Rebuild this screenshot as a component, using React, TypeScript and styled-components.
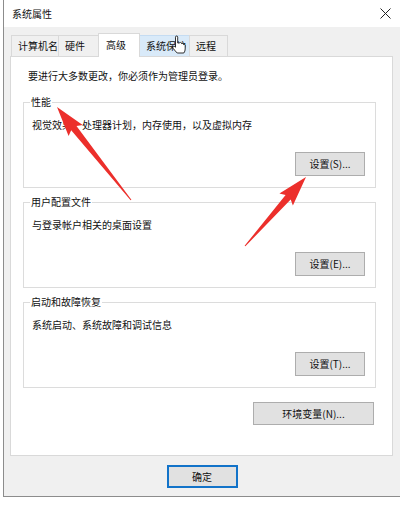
import React from 'react';
import styled, { createGlobalStyle } from 'styled-components';

const FONT = '"Noto Sans CJK SC", "Noto Sans", "Liberation Sans", sans-serif';

const GlobalStyle = createGlobalStyle`
  html, body {
    margin: 0;
    padding: 0;
    background: #ffffff;
  }
  body {
    font-family: ${FONT};
    font-size: 10px;
    color: #111;
  }
`;

type Pt = [number, number];

const tabs = [
  { label: '计算机名', width: 48 },
  { label: '硬件', width: 41 },
  { label: '高级', width: 42, active: true },
  { label: '系统保护', width: 51, hover: true },
  { label: '远程', width: 39 },
];

const groups = [
  { title: '性能', text: '视觉效果，处理器计划，内存使用，以及虚拟内存', button: '设置(S)...' },
  { title: '用户配置文件', text: '与登录帐户相关的桌面设置', button: '设置(E)...' },
  { title: '启动和故障恢复', text: '系统启动、系统故障和调试信息', button: '设置(T)...' },
];

// tapered marker arrow from tail to tip
const arrowPoints = (tail: Pt, tip: Pt) => {
  const dx = tip[0] - tail[0];
  const dy = tip[1] - tail[1];
  const len = Math.hypot(dx, dy);
  const ux = dx / len;
  const uy = dy / len;
  const px = -uy;
  const py = ux;
  const headLen = 27;
  const headHalf = 9;
  const neckHalf = 3.4;
  const tailHalf = 0.5;
  const nx = tip[0] - ux * headLen;
  const ny = tip[1] - uy * headLen;
  const bx = nx - ux * 3;
  const by = ny - uy * 3;
  const pts: Pt[] = [
    [tail[0] + px * tailHalf, tail[1] + py * tailHalf],
    [nx + px * neckHalf, ny + py * neckHalf],
    [bx + px * headHalf, by + py * headHalf],
    tip,
    [bx - px * headHalf, by - py * headHalf],
    [nx - px * neckHalf, ny - py * neckHalf],
    [tail[0] - px * tailHalf, tail[1] - py * tailHalf],
  ];
  return pts.map((p) => `${p[0].toFixed(1)},${p[1].toFixed(1)}`).join(' ');
};

const App: React.FC = () => {
  return (
    <Screen>
      <GlobalStyle />
      <Window>
        <TitleBar>
          <Title>系统属性</Title>
          <CloseIcon width="11" height="11" viewBox="0 0 11 11">
            <path d="M0.5 0.5 L10.5 10.5 M10.5 0.5 L0.5 10.5" stroke="#222" strokeWidth="1" />
          </CloseIcon>
        </TitleBar>

        <TabStrip>
          {tabs.map((t) => (
            <Tab key={t.label} $width={t.width} $active={!!t.active} $hover={!!t.hover}>
              {t.label}
            </Tab>
          ))}
        </TabStrip>

        <Panel>
          <Notice>要进行大多数更改，你必须作为管理员登录。</Notice>

          {groups.map((g, i) => (
            <Group key={g.title} $first={i === 0}>
              <Legend>{g.title}</Legend>
              <Description>{g.text}</Description>
              <ButtonRow>
                <Button $width={70} $height={24}>{g.button}</Button>
              </ButtonRow>
            </Group>
          ))}

          <EnvRow>
            <Button $width={121} $height={23}>环境变量(N)...</Button>
          </EnvRow>
        </Panel>

        <Footer>
          <Button $width={71} $height={23} $primary>确定</Button>
        </Footer>
      </Window>

      <Overlay width="400" height="505" viewBox="0 0 400 505">
        <polygon points={arrowPoints([131, 200], [57, 107])} fill="#ec2f2b" />
        <polygon points={arrowPoints([245, 246], [306, 177])} fill="#ec2f2b" />
        {/* hand pointer resting on the 系统保护 tab */}
        <g transform="translate(171 36)">
          <path
            d="M4.5 1.2 Q4.5 0 5.6 0 Q6.7 0 6.7 1.2 V7 H8.4 V6.8 Q9.6 6 10.6 7 V7.6 Q11.6 7 12.6 8 V8.6 Q13.6 8.2 14.2 9.2 V13 Q14.2 15.2 12.8 17 H6.2 Q4.2 15 2.2 12.4 Q1.2 10.8 2.2 10.2 Q3.2 9.8 4.5 11.2 Z"
            fill="#fff"
            stroke="#1a1a1a"
            strokeWidth="0.9"
            strokeLinejoin="round"
          />
        </g>
      </Overlay>
    </Screen>
  );
};

export default App;

const Screen = styled.div`
  position: relative;
  width: 400px;
  height: 505px;
  overflow: hidden;
`;

const Window = styled.div`
  margin-left: 3px;
  width: 396px;
  height: 496px;
  border-left: 1px solid #8c8c8c;
  border-bottom: 1px solid #8c8c8c;
  background: #f0f0f0;
  display: flex;
  flex-direction: column;
`;

const TitleBar = styled.div`
  height: 27px;
  flex: none;
  background: #ffffff;
  display: flex;
  align-items: center;
  justify-content: space-between;
  padding: 0 9px 0 8px;
`;

const Title = styled.span`
  font-size: 10px;
  line-height: 14px;
  color: #111;
`;

const CloseIcon = styled.svg`
  display: block;
  margin-top: -1px;
`;

const TabStrip = styled.div`
  display: flex;
  align-items: flex-end;
  height: 23px;
  margin-top: 6px;
  padding-left: 8px;
  flex: none;
`;

interface TabProps {
  $width: number;
  $active: boolean;
  $hover: boolean;
}
const Tab = styled.div<TabProps>`
  position: relative;
  box-sizing: border-box;
  width: ${(p) => p.$width}px;
  height: ${(p) => (p.$active ? 24 : 21)}px;
  margin-left: -1px;
  margin-bottom: ${(p) => (p.$active ? -1 : 0)}px;
  padding: ${(p) => (p.$active ? '4px 0 0 7px' : '3px 0 0 6px')};
  border: 1px solid ${(p) => (p.$hover ? '#c5dcf2' : '#d9d9d9')};
  border-bottom: ${(p) => (p.$active ? 'none' : '0')};
  background: ${(p) => (p.$active ? '#ffffff' : p.$hover ? '#d9eaf9' : '#f0f0f0')};
  z-index: ${(p) => (p.$active ? 2 : 1)};
  font-size: 10px;
  line-height: 14px;
  white-space: nowrap;
`;

const Panel = styled.div`
  box-sizing: border-box;
  height: 400px;
  margin: 0 7px 0 6px;
  border: 1px solid #d9d9d9;
  background: #ffffff;
  padding: 12px 16px 0 12px;
  display: flex;
  flex-direction: column;
  flex: none;
`;

const Notice = styled.div`
  margin-left: 5px;
  line-height: 14px;
`;

const Group = styled.fieldset<{ $first: boolean }>`
  margin: ${(p) => (p.$first ? 12 : 7)}px 0 0;
  padding: 0 10px 11px 6px;
  border: 1px solid #dcdcdc;
  min-width: 0;
`;

const Legend = styled.legend`
  padding: 0 1px;
  line-height: 14px;
  font-size: 10px;
`;

const Description = styled.div`
  margin: 9px 0 0 2px;
  line-height: 14px;
`;

const ButtonRow = styled.div`
  display: flex;
  justify-content: flex-end;
  margin-top: 20px;
`;

const EnvRow = styled.div`
  display: flex;
  justify-content: flex-end;
  margin-top: 14px;
  padding-right: 2px;
`;

const Footer = styled.div`
  display: flex;
  justify-content: center;
  padding-top: 9px;
`;

interface ButtonProps {
  $width: number;
  $height: number;
  $primary?: boolean;
}
const Button = styled.button<ButtonProps>`
  box-sizing: border-box;
  width: ${(p) => p.$width}px;
  height: ${(p) => p.$height}px;
  padding: 0;
  margin: 0;
  font-family: ${FONT};
  font-size: 10px;
  line-height: 14px;
  color: #111;
  background: #e1e1e1;
  border: ${(p) => (p.$primary ? '2px solid #1273c9' : '1px solid #adadad')};
  border-radius: 0;
`;

const Overlay = styled.svg`
  position: absolute;
  top: 0;
  left: 0;
  z-index: 10;
  pointer-events: none;
`;
